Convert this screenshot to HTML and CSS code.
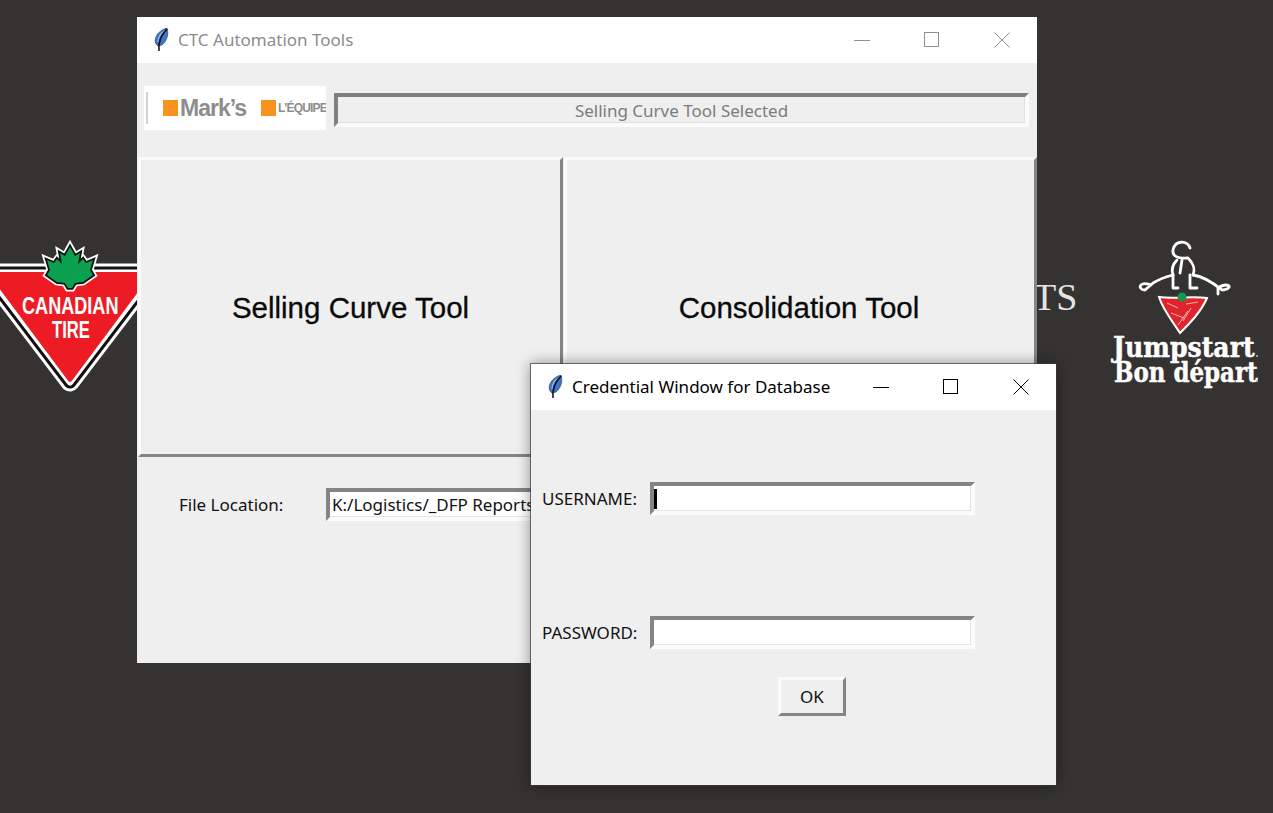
FILE: index.html
```html
<!DOCTYPE html>
<html lang="en">
<head>
<meta charset="utf-8">
<title>CTC Automation Tools</title>
<link rel="stylesheet" href="styles.css">
</head>
<body>
<svg class="logo-tire" width="137" height="180" viewBox="0 220 137 180">
  <polygon class="tri tri-w1" points="-13,273 153,273 70,382"/>
  <polygon class="tri tri-k" points="-13,273 153,273 70,382"/>
  <polygon class="tri tri-w2" points="-13,273 153,273 70,382"/>
  <path class="tri-red" d="M-13 272H153L72.500 380Q70 384 67.500 380Z"/>
  <path class="leaf-w" d="M70 247L75 256L80 253L78 264L83 259L86 263L93 260L90 270L93 275L83 282L75 283L72 288H68L65 283L57 282L47 275L50 270L47 260L54 263L57 259L62 264L60 253L65 256Z"/>
  <path class="leaf-k" d="M70 247L75 256L80 253L78 264L83 259L86 263L93 260L90 270L93 275L83 282L75 283L72 288H68L65 283L57 282L47 275L50 270L47 260L54 263L57 259L62 264L60 253L65 256Z"/>
  <path class="leaf-g" d="M70 247L75 256L80 253L78 264L83 259L86 263L93 260L90 270L93 275L83 282L75 283L72 288H68L65 283L57 282L47 275L50 270L47 260L54 263L57 259L62 264L60 253L65 256Z"/>
  <text class="tire-text" transform="translate(22 314) scale(.77 1)">CANADIAN</text>
  <text class="tire-text" transform="translate(52 338) scale(.71 1)">TIRE</text>
</svg>

<div class="ts">TS</div>

<svg class="logo-jump" width="160" height="165" viewBox="1105 235 160 165">
  <g class="fig">
    <path d="M1190 248C1187 240 1175 240 1173 250C1172 256 1178 259 1187 258"/>
    <path d="M1177 260C1173 264 1171 269 1173 275M1188 258C1192 262 1196 267 1193 275"/>
    <path d="M1182 260L1180 273"/>
    <path d="M1173 275C1165 277 1158 280 1153 283L1145 290C1141 290 1139 287 1141 285C1144 282 1148 284 1151 285"/>
    <path d="M1193 275C1201 276 1212 282 1222 290C1226 290 1230 288 1229 286C1226 284 1221 286 1218 288V294"/>
    <path d="M1173 275V288H1178M1190 275V288H1197"/>
  </g>
  <path class="tri-j" d="M1159 297C1175 299 1192 296 1207 298C1201 312 1190 323 1180 333C1173 322 1163 310 1159 297Z"/>
  <path class="marks-j" d="M1167 303L1178 308M1186 304L1198 302M1171 313L1184 318M1178 325L1188 311M1191 308L1183 321"/>
  <circle class="dot-j" cx="1182" cy="297" r="4.500"/>
  <text class="jump-text" transform="translate(1113 357) scale(.9 1)">Jumpstart</text>
  <text class="jump-text" transform="translate(1114 382) scale(.82 1)">Bon départ</text>
  <circle class="jump-dot" cx="1257" cy="356" r="1"/>
  <circle class="jump-dot" cx="1257" cy="381" r="1"/>
</svg>

<div class="window main-win">
  <div class="titlebar inactive">
    <svg class="feather" width="16" height="24" viewBox="0 0 16 24">
      <path class="feather-blue" d="M14 0C16 6 14 13 9 17L5 18C-1 14 3 3 14 0Z"/>
      <path class="feather-light" d="M12 3C8 5 5 9 5 14"/>
      <path class="feather-shaft" d="M14 1C8 7 5 14 6 23"/>
    </svg>
    <span class="title-text">CTC Automation Tools</span>
    <div class="caption">
      <div class="cap-btn"><svg width="16" height="16" viewBox="0 0 16 16"><path d="M0 8.500H16"/></svg></div>
      <div class="cap-btn"><svg width="16" height="16" viewBox="0 0 16 16"><rect x="0.500" y="0.500" width="14" height="14"/></svg></div>
      <div class="cap-btn"><svg width="16" height="16" viewBox="0 0 16 16"><path d="M0.500 0.500L15.500 15.500M15.500 0.500L0.500 15.500"/></svg></div>
    </div>
  </div>
  <div class="main-body">
    <div class="top-row">
      <div class="brand">
        <span class="brand-rule"></span>
        <span class="brand-sq"></span>
        <span class="brand-marks">Mark’s</span>
        <span class="brand-sq brand-sq2"></span>
        <span class="brand-equipe">L’ÉQUIPE</span>
      </div>
      <div class="status">Selling Curve Tool Selected</div>
    </div>
    <div class="tool-row">
      <div class="raised tool tool-left">Selling Curve Tool</div>
      <div class="raised tool tool-right">Consolidation Tool</div>
    </div>
    <div class="file-row">
      <span class="file-label">File Location:</span>
      <div class="entry file-entry">K:/Logistics/_DFP Reports</div>
    </div>
  </div>
</div>

<div class="window cred-win">
  <div class="titlebar">
    <svg class="feather" width="16" height="24" viewBox="0 0 16 24">
      <path class="feather-blue" d="M14 0C16 6 14 13 9 17L5 18C-1 14 3 3 14 0Z"/>
      <path class="feather-light" d="M12 3C8 5 5 9 5 14"/>
      <path class="feather-shaft" d="M14 1C8 7 5 14 6 23"/>
    </svg>
    <span class="title-text">Credential Window for Database</span>
    <div class="caption">
      <div class="cap-btn"><svg width="16" height="16" viewBox="0 0 16 16"><path d="M0 8.500H16"/></svg></div>
      <div class="cap-btn"><svg width="16" height="16" viewBox="0 0 16 16"><rect x="0.500" y="0.500" width="14" height="14"/></svg></div>
      <div class="cap-btn"><svg width="16" height="16" viewBox="0 0 16 16"><path d="M0.500 0.500L15.500 15.500M15.500 0.500L0.500 15.500"/></svg></div>
    </div>
  </div>
  <div class="cred-body">
    <div class="cred-row">
      <span class="cred-label">USERNAME:</span>
      <div class="entry cred-entry"><span class="caret"></span></div>
    </div>
    <div class="cred-row cred-row2">
      <span class="cred-label">PASSWORD:</span>
      <div class="entry cred-entry"></div>
    </div>
    <div class="raised ok">OK</div>
  </div>
</div>
</body>
</html>
```
FILE: styles.css
```css
* { box-sizing: border-box; }
html, body { margin: 0; padding: 0; }
body {
  width: 1273px;
  height: 813px;
  overflow: hidden;
  position: relative;
  background: #343332;
  font-family: "Noto Sans", "Open Sans", sans-serif;
}

/* Desktop items */
.logo-tire { position: absolute; left: 0; top: 220px; }
.tri { fill: none; stroke-linejoin: round; }
.tri-w1 { stroke: #fff; stroke-width: 19; }
.tri-k { stroke: #111; stroke-width: 13; }
.tri-w2 { stroke: #fff; stroke-width: 7; }
.tri-red { fill: #ed1c24; }
.leaf-w, .leaf-k { stroke-linejoin: miter; stroke-miterlimit: 8; }
.leaf-w { fill: #fff; stroke: #fff; stroke-width: 7; }
.leaf-k { fill: #111; stroke: #111; stroke-width: 3.500; }
.leaf-g { fill: #0aa04f; }
.tire-text { fill: #fff; font: bold 23.500px "Liberation Sans", sans-serif; }

.ts {
  position: absolute;
  left: 1033px;
  top: 275px;
  color: #e4e4e4;
  font: 38px/44px "Liberation Serif", serif;
}

.logo-jump { position: absolute; left: 1105px; top: 235px; }
.fig { fill: none; stroke: #fff; stroke-width: 2.800; stroke-linecap: round; stroke-linejoin: round; }
.tri-j { fill: #e0242c; stroke: #fff; stroke-width: 2; }
.marks-j { fill: none; stroke: #f3b5b5; stroke-width: 1; }
.dot-j { fill: #0d9b50; }
.jump-text { fill: #fff; stroke: #fff; stroke-width: .5; font: bold 28px "DejaVu Serif", serif; }
.jump-dot { fill: #bbb; }

/* Windows */
.window {
  position: absolute;
  display: flex;
  flex-direction: column;
  background: #efefef;
}
.main-win { left: 137px; top: 17px; width: 900px; height: 646px; }
.cred-win {
  left: 531px;
  top: 364px;
  width: 525px;
  height: 421px;
  box-shadow: 0 0 14px rgba(0, 0, 0, .45);
  outline: 1px solid rgba(60, 60, 60, .7);
}

.titlebar {
  flex: none;
  height: 46px;
  display: flex;
  align-items: center;
  background: #fff;
  padding-left: 16px;
  color: #000;
}
.feather { flex: none; margin-right: 9px; }
.feather-blue { fill: #3d76c9; stroke: #1d2f55; stroke-width: .6; }
.feather-light { fill: none; stroke: #9cc0ea; stroke-width: 1.200; }
.feather-shaft { fill: none; stroke: #0c0c0c; stroke-width: 1.500; }
.title-text { font-size: 17px; white-space: nowrap; margin-top: -2px; }
.caption { margin-left: auto; display: flex; height: 100%; }
.cap-btn { width: 70px; display: flex; align-items: center; justify-content: center; }
.cap-btn svg { fill: none; stroke: #000; stroke-width: 1; }
.inactive .title-text { color: #8c8c8c; }
.inactive .cap-btn svg { stroke: #909090; }

/* Relief */
.raised {
  border: 3px solid;
  border-color: #fbfbfb #858585 #858585 #fbfbfb;
  background: #efefef;
  display: flex;
  align-items: center;
  justify-content: center;
}
.entry {
  border: 4px solid;
  border-color: #848484 #fbfbfb #fbfbfb #848484;
  background: #fff;
  box-shadow: inset -1px -1px 0 #e3e3e3;
  color: #111;
  white-space: nowrap;
  overflow: hidden;
  font-size: 17px;
  line-height: 25px;
}

/* Main window body */
.main-body { flex: 1; display: flex; flex-direction: column; }
.top-row {
  flex: none;
  height: 94px;
  display: flex;
  align-items: center;
  padding-left: 7px;
  gap: 8px;
}
.brand {
  width: 182px;
  height: 44px;
  margin-top: -4px;
  background: #fff;
  display: flex;
  align-items: center;
  overflow: hidden;
  white-space: nowrap;
  font-family: "Liberation Sans", sans-serif;
  font-weight: bold;
  color: #8d8d8d;
}
.brand-rule { flex: none; width: 2px; height: 32px; margin-left: 2px; margin-right: 15px; background: #d4d4d4; }
.brand-sq { flex: none; width: 15px; height: 16px; background: #f7931e; }
.brand-marks { font-size: 23px; letter-spacing: -1px; margin-left: 2px; }
.brand-sq2 { margin-left: 15px; }
.brand-equipe { font-size: 12px; letter-spacing: -.8px; margin-left: 2px; }
.status {
  width: 695px;
  height: 34px;
  border: 4px solid;
  border-color: #808080 #fbfbfb #fbfbfb #808080;
  box-shadow: inset -1px -1px 0 #e0e0e0;
  display: flex;
  align-items: center;
  justify-content: center;
  color: #7c7c7c;
  font-size: 17px;
}
.tool-row { flex: none; display: flex; height: 300px; padding-left: 1px; gap: 1px; }
.tool {
  font-family: "Liberation Sans", sans-serif;
  font-size: 29.500px;
  -webkit-text-stroke: .3px #0a0a0a;
  color: #0a0a0a;
  padding-top: 2px;
}
.tool-left { width: 425px; }
.tool-right { width: 473px; padding-right: 3px; }
.file-row { flex: none; display: flex; align-items: center; margin-top: 31px; padding-left: 42px; }
.file-label { width: 147px; font-size: 17px; color: #111; white-space: nowrap; }
.file-entry { width: 300px; height: 33px; padding-left: 2px; }

/* Credential window body */
.cred-body { flex: 1; display: flex; flex-direction: column; padding: 72px 0 0 11px; }
.cred-row { display: flex; align-items: center; }
.cred-row2 { margin-top: 101px; }
.cred-label { width: 108px; font-size: 17px; color: #111; white-space: nowrap; }
.cred-entry { width: 325px; height: 33px; padding: 3px 0 0 0; }
.caret { display: block; width: 3px; height: 20px; background: #000; }
.ok {
  width: 68px;
  height: 39px;
  margin: 28px 0 0 236px;
  font-size: 17px;
  color: #111;
}
```
